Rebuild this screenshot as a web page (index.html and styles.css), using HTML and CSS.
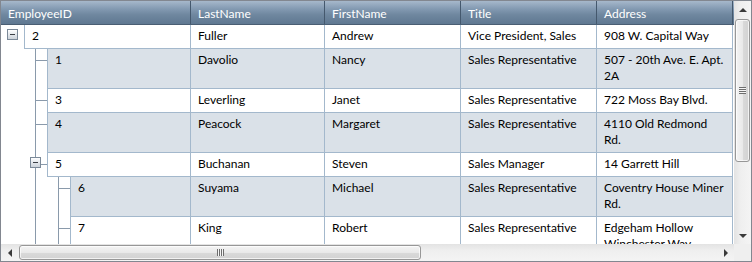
FILE: index.html
```html
<!DOCTYPE html>
<html>
<head>
<meta charset="utf-8">
<link rel="stylesheet" href="styles.css">
</head>
<body>
<div class="grid">
  <div class="viewport">
    <div class="cols header">
      <div class="hcell">EmployeeID</div>
      <div class="hcell">LastName</div>
      <div class="hcell">FirstName</div>
      <div class="hcell">Title</div>
      <div class="hcell">Address</div>
    </div>

    <div class="cols row">
      <div class="first">
        <div class="seg"><span class="expander"></span></div>
        <div class="cell id">2</div>
      </div>
      <div class="cell">Fuller</div>
      <div class="cell">Andrew</div>
      <div class="cell">Vice President, Sales</div>
      <div class="cell">908 W. Capital Way</div>
    </div>

    <div class="cols row alt">
      <div class="first">
        <div class="seg"></div>
        <div class="seg vh"></div>
        <div class="cell id">1</div>
      </div>
      <div class="cell">Davolio</div>
      <div class="cell">Nancy</div>
      <div class="cell">Sales Representative</div>
      <div class="cell">507 - 20th Ave. E. Apt.<br>2A</div>
    </div>

    <div class="cols row">
      <div class="first">
        <div class="seg"></div>
        <div class="seg vh"></div>
        <div class="cell id">3</div>
      </div>
      <div class="cell">Leverling</div>
      <div class="cell">Janet</div>
      <div class="cell">Sales Representative</div>
      <div class="cell">722 Moss Bay Blvd.</div>
    </div>

    <div class="cols row alt">
      <div class="first">
        <div class="seg"></div>
        <div class="seg vh"></div>
        <div class="cell id">4</div>
      </div>
      <div class="cell">Peacock</div>
      <div class="cell">Margaret</div>
      <div class="cell">Sales Representative</div>
      <div class="cell">4110 Old Redmond<br>Rd.</div>
    </div>

    <div class="cols row">
      <div class="first">
        <div class="seg"></div>
        <div class="seg vh"><span class="expander"></span></div>
        <div class="cell id">5</div>
      </div>
      <div class="cell">Buchanan</div>
      <div class="cell">Steven</div>
      <div class="cell">Sales Manager</div>
      <div class="cell">14 Garrett Hill</div>
    </div>

    <div class="cols row alt">
      <div class="first">
        <div class="seg"></div>
        <div class="seg v"></div>
        <div class="seg vh"></div>
        <div class="cell id">6</div>
      </div>
      <div class="cell">Suyama</div>
      <div class="cell">Michael</div>
      <div class="cell">Sales Representative</div>
      <div class="cell">Coventry House Miner<br>Rd.</div>
    </div>

    <div class="cols row">
      <div class="first">
        <div class="seg"></div>
        <div class="seg v"></div>
        <div class="seg vh"></div>
        <div class="cell id">7</div>
      </div>
      <div class="cell">King</div>
      <div class="cell">Robert</div>
      <div class="cell">Sales Representative</div>
      <div class="cell">Edgeham Hollow<br>Winchester Way</div>
    </div>
  </div>

  <div class="vscroll">
    <div class="sbtn"><span class="arr-up"></span></div>
    <div class="vtrack"><div class="vthumb"><span class="vgrip"></span></div></div>
    <div class="sbtn"><span class="arr-down"></span></div>
  </div>

  <div class="hscroll">
    <div class="sbtn h"><span class="arr-left"></span></div>
    <div class="htrack"><div class="hthumb"><span class="hgrip"></span></div></div>
    <div class="sbtn h"><span class="arr-right"></span></div>
  </div>

  <div class="corner"></div>
</div>
</body>
</html>
```

FILE: styles.css
```css
* { box-sizing: border-box; }
html, body { margin: 0; padding: 0; background: #fff; }
body {
  font-family: Lato, "Liberation Sans", sans-serif;
  font-size: 12px;
  color: #000;
}

.grid {
  width: 752px;
  height: 262px;
  border: 1px solid #828790;
  display: grid;
  grid-template-columns: 733px 17px;
  grid-template-rows: 243px 17px;
  background: #fff;
}

.viewport { overflow: hidden; grid-row: 1; grid-column: 1; }

.cols {
  display: grid;
  grid-template-columns: 190px 134px 136px 136px 136px;
}

.header {
  height: 24px;
  background: linear-gradient(#a6b8cb, #8299b1 35%, #6f879f 60%, #5f7891);
  border-bottom: 1px solid #4a5e73;
}
.hcell {
  color: #fff;
  padding: 5px 7px 0;
  line-height: 16px;
  border-right: 1px solid #44586d;
  white-space: nowrap;
}

.cell {
  padding: 3px 7px 4px;
  line-height: 16px;
  border-right: 1px solid #a3b8cc;
  border-bottom: 1px solid #a3b8cc;
  white-space: nowrap;
  background: #fff;
}
.alt .cell { background: #dae1e8; }

.first { display: flex; }
.first .cell.id { flex: 1; border-left: 1px solid #a3b8cc; }

.seg { width: 23px; flex: none; }
.seg.v {
  background: linear-gradient(#8a9aab, #8a9aab) 11px 0 / 1px 100% no-repeat;
}
.seg.vh {
  background:
    linear-gradient(#8a9aab, #8a9aab) 11px 0 / 1px 100% no-repeat,
    linear-gradient(#8a9aab, #8a9aab) 11px 11px / 12px 1px no-repeat;
}

.expander {
  display: flex;
  width: 11px;
  height: 11px;
  margin: 4px 0 0 6px;
  border: 1px solid #7b8998;
  background: linear-gradient(#ffffff, #e4e8ec 50%, #cdd3da);
  align-items: center;
  justify-content: center;
}
.expander::before {
  content: "";
  width: 5px;
  height: 1px;
  background: #3c4046;
}

/* scrollbars */
.vscroll {
  grid-row: 1;
  grid-column: 2;
  display: flex;
  flex-direction: column;
  background: linear-gradient(90deg, #e3e3e3, #efefef 40%, #f4f4f4);
}
.sbtn {
  height: 17px;
  flex: none;
  display: flex;
  align-items: center;
  justify-content: center;
}
.sbtn.h { width: 17px; height: auto; }

.arr-up { width: 0; height: 0; border-left: 4px solid transparent; border-right: 4px solid transparent; border-bottom: 4px solid #3a3a3a; }
.arr-down { width: 0; height: 0; border-left: 4px solid transparent; border-right: 4px solid transparent; border-top: 4px solid #3a3a3a; }
.arr-left { width: 0; height: 0; border-top: 4px solid transparent; border-bottom: 4px solid transparent; border-right: 4px solid #3a3a3a; }
.arr-right { width: 0; height: 0; border-top: 4px solid transparent; border-bottom: 4px solid transparent; border-left: 4px solid #3a3a3a; }

.vtrack { flex: 1; padding: 1px 1px 0; }
.vthumb {
  height: 143px;
  border: 1px solid #979797;
  border-radius: 3px;
  background: linear-gradient(90deg, #f4f4f4, #e9e9e9 50%, #dadada 51%, #d2d2d2);
  box-shadow: inset 0 0 0 1px rgba(255,255,255,0.7);
  display: flex;
  align-items: center;
  justify-content: center;
}
.vgrip {
  width: 7px;
  height: 7px;
  background: repeating-linear-gradient(#6d6d6d 0 1px, #f5f5f5 1px 2px);
}

.hscroll {
  grid-row: 2;
  grid-column: 1;
  display: flex;
  background: linear-gradient(#e3e3e3, #efefef 40%, #f4f4f4);
}
.htrack { flex: 1; padding: 1px 0 1px 1px; }
.hthumb {
  width: 402px;
  height: 100%;
  border: 1px solid #979797;
  border-radius: 3px;
  background: linear-gradient(#f4f4f4, #e9e9e9 50%, #dadada 51%, #d2d2d2);
  box-shadow: inset 0 0 0 1px rgba(255,255,255,0.7);
  display: flex;
  align-items: center;
  justify-content: center;
}
.hgrip {
  width: 7px;
  height: 7px;
  background: repeating-linear-gradient(90deg, #6d6d6d 0 1px, #f5f5f5 1px 2px);
}

.corner { grid-row: 2; grid-column: 2; background: #efefef; }
```
